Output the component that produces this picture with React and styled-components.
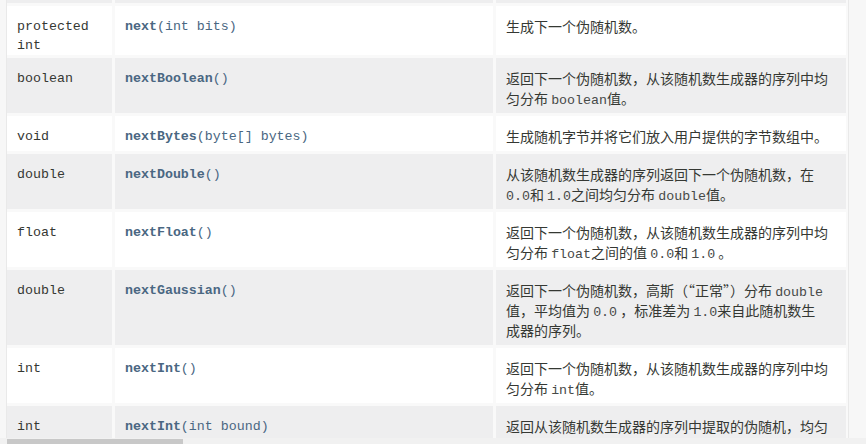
import React, { useLayoutEffect, useRef } from 'react'
import styled, { createGlobalStyle } from 'styled-components'

const GlobalStyle = createGlobalStyle`
  html, body {
    margin: 0;
    padding: 0;
    background: #f7f7f7;
    overflow: hidden;
  }
  body {
    font-family: 'Noto Sans CJK SC', 'Noto Sans', sans-serif;
    color: #353833;
  }
`

const mono = `'Liberation Mono', 'Courier New', 'Noto Sans CJK SC', monospace`

const Page = styled.div`
  display: flex;
  flex-direction: column;
  width: 866px;
  height: 444px;
`

const Body = styled.div`
  display: flex;
  flex: 1;
  min-height: 0;
`

const Gutter = styled.div`
  width: 6px;
  border-right: 1px solid #e9e9e9;
  background: #f7f7f7;
`

const Viewport = styled.div`
  position: relative;
  width: 839px;
  padding-right: 2px;
  background: #f9f9f9;
  overflow: hidden;
`

const Side = styled.div`
  flex: 1;
  border-left: 1px solid #e9e9e9;
  background: #f7f7f7;
`

const Summary = styled.div`
  display: grid;
  grid-template-columns: 105px 378px 350px;
  gap: 3px;
  background: #f9f9f9;
`

const Cell = styled.div`
  padding: 10px 10px 5px;
  background: ${p => (p.$alt ? '#eeeeef' : '#ffffff')};
  font-size: 14px;
  line-height: 20px;
  overflow: hidden;
`

const TypeCell = styled(Cell)`
  padding: 11px 10px 0;
  font-family: ${mono};
  font-size: 13.3px;
  line-height: 19px;
  color: #353833;
`

const MethodCell = styled(Cell)`
  padding: 11px 10px 0;
  font-family: ${mono};
  font-size: 13.3px;
  line-height: 19px;
  color: #4a6782;
  white-space: nowrap;
`

const MethodName = styled.span`
  font-weight: bold;
`

const Line = styled.div`
  height: 20px;
  white-space: nowrap;
`

const Code = styled.code`
  font-family: ${mono};
  font-size: 13.3px;
  line-height: 1;
  color: #474a48;
`

const Track = styled.div`
  height: 6px;
  padding-top: 1px;
  box-sizing: border-box;
  background: #f1f1f1;
  display: flex;
`

const Thumb = styled.div`
  margin-left: 7px;
  width: 176px;
  height: 5px;
  background: #c8c8c8;
`

const methods = [
  {
    type: 'LongStream',
    name: 'longs',
    params: '(long randomNumberOrigin, long randomNumberBound)',
    desc: ['返回有效无限的伪随机 `long`值流，每个值符合给定的', '起始（包括）和绑定（排他）。'],
  },
  { type: 'protected int', name: 'next', params: '(int bits)', desc: ['生成下一个伪随机数。'] },
  {
    type: 'boolean',
    name: 'nextBoolean',
    params: '()',
    desc: ['返回下一个伪随机数，从该随机数生成器的序列中均', '匀分布 `boolean`值。'],
  },
  {
    type: 'void',
    name: 'nextBytes',
    params: '(byte[] bytes)',
    desc: ['生成随机字节并将它们放入用户提供的字节数组中。'],
  },
  {
    type: 'double',
    name: 'nextDouble',
    params: '()',
    desc: ['从该随机数生成器的序列返回下一个伪随机数，在', '`0.0`和 `1.0`之间均匀分布 `double`值。'],
  },
  {
    type: 'float',
    name: 'nextFloat',
    params: '()',
    desc: ['返回下一个伪随机数，从该随机数生成器的序列中均', '匀分布 `float`之间的值 `0.0`和 `1.0` 。'],
  },
  {
    type: 'double',
    name: 'nextGaussian',
    params: '()',
    desc: [
      '返回下一个伪随机数，高斯（“正常”）分布 `double`',
      '值，平均值为 `0.0` ，标准差为 `1.0`来自此随机数生',
      '成器的序列。',
    ],
  },
  {
    type: 'int',
    name: 'nextInt',
    params: '()',
    desc: ['返回下一个伪随机数，从该随机数生成器的序列中均', '匀分布 `int`值。'],
  },
  {
    type: 'int',
    name: 'nextInt',
    params: '(int bound)',
    desc: ['返回从该随机数生成器的序列中提取的伪随机，均匀', '分布的值在0（包括）和指定值（不包括）之间的', '`int`值。'],
  },
]

const renderLine = text =>
  text.split('`').map((part, i) => (i % 2 ? <Code key={i}>{part}</Code> : part))

const App = () => {
  const viewRef = useRef(null)
  const firstRef = useRef(null)

  // the reference is a scrolled view: row "next(int bits)" sits 6px from the top
  useLayoutEffect(() => {
    if (viewRef.current && firstRef.current) {
      viewRef.current.scrollTop = firstRef.current.offsetTop - 6
    }
  }, [])

  return (
    <Page>
      <GlobalStyle />
      <Body>
        <Gutter />
        <Viewport ref={viewRef}>
          <Summary>
            {methods.map((m, i) => {
              const alt = i % 2 === 0
              return (
                <React.Fragment key={i}>
                  <TypeCell $alt={alt} ref={i === 1 ? firstRef : null}>{m.type}</TypeCell>
                  <MethodCell $alt={alt}>
                    <MethodName>{m.name}</MethodName>
                    {m.params}
                  </MethodCell>
                  <Cell $alt={alt}>
                    {m.desc.map((line, j) => (
                      <Line key={j}>{renderLine(line)}</Line>
                    ))}
                  </Cell>
                </React.Fragment>
              )
            })}
          </Summary>
        </Viewport>
        <Side />
      </Body>
      <Track>
        <Thumb />
      </Track>
    </Page>
  )
}

export default App
